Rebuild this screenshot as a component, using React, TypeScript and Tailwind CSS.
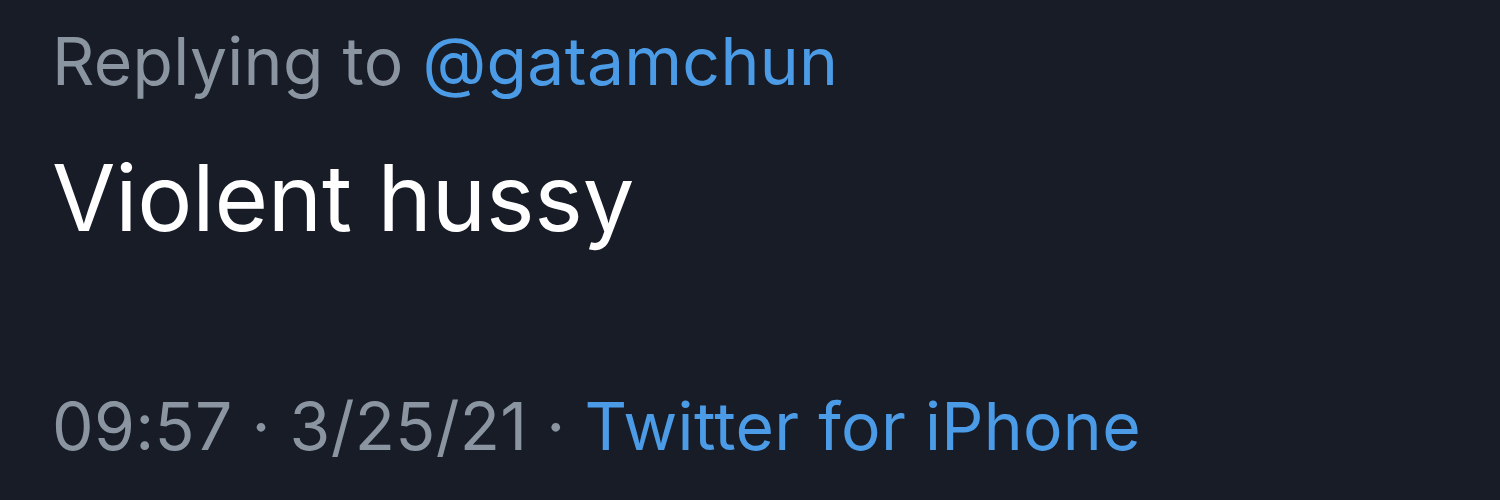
export default function App() {
  return (
    <div
      className="w-[1500px] h-[500px] bg-[#171c27] flex flex-col pl-[52px] pt-[21px] overflow-hidden"
      style={{ fontFamily: 'Inter, "Noto Sans", sans-serif' }}
    >
      <div className="text-[66px] leading-[80px] tracking-[0.3px] text-[#8b95a1]">
        Replying to <span className="text-[#4b9be6]">@gatamchun</span>
      </div>
      <div className="mt-[42px] text-[92px] leading-[110px] tracking-[-0.2px] text-white">
        Violent hussy
      </div>
      <div className="mt-[133px] text-[66px] leading-[80px] tracking-[0.3px] text-[#8b95a1]">
        09:57 · 3/25/21 · <span className="text-[#4b9be6]">Twitter for iPhone</span>
      </div>
    </div>
  );
}
